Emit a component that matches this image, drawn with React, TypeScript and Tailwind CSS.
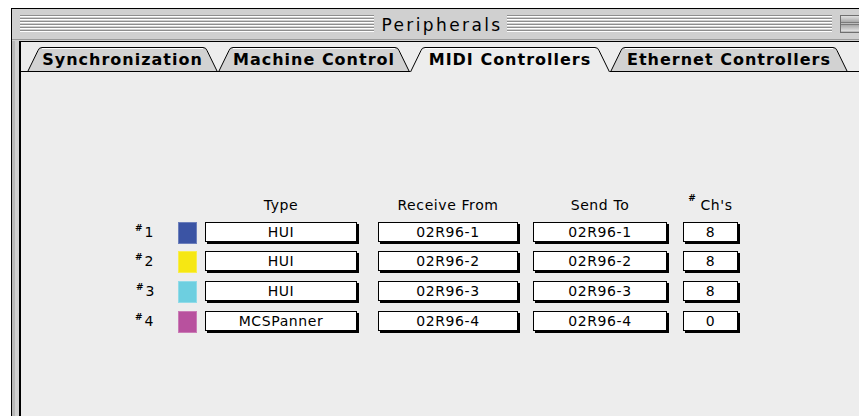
import * as React from "react";

const stripes =
  "h-[18px] bg-[repeating-linear-gradient(to_bottom,#8e8e8e_0px,#8e8e8e_1px,#ffffff_1px,#ffffff_2px,#d0d0d0_2px,#d0d0d0_3px)]";

type TabProps = { label: string; w: number; active?: boolean };

function Tab({ label, w, active }: TabProps) {
  const s = 11;
  const h = 25;
  const d = `M0.5 ${h} L${s} 3.5 Q${s + 1} 0.5 ${s + 4} 0.5 L${w - s - 4} 0.5 Q${w - s - 1} 0.5 ${w - s} 3.5 L${w - 0.5} ${h}`;
  return (
    <div className="relative flex h-[25px] shrink-0 items-center justify-center" style={{ width: w }}>
      <svg className="absolute inset-0 overflow-visible" width={w} height={h} viewBox={`0 0 ${w} ${h}`}>
        <path d={d + " Z"} fill={active ? "#ededed" : "#d2d2d2"} stroke="none" />
        <path d={`M${s + 4} 1.5 L${w - s - 4} 1.5`} stroke="#ffffff" strokeWidth="1" />
        <path d={d} fill="none" stroke="#000" strokeWidth="1" />
        {!active && <path d={`M0 ${h - 0.5} L${w} ${h - 0.5}`} stroke="#000" strokeWidth="1" />}
      </svg>
      <span className="relative text-[16px] font-bold tracking-[1px] text-black">{label}</span>
    </div>
  );
}

function Field({ text, w }: { text: string; w: string }) {
  return (
    <div
      className={`${w} flex h-[20px] shrink-0 items-center justify-center border border-black bg-white shadow-[2px_2px_0_#000] text-[14px] tracking-[0.6px] text-black`}
    >
      {text}
    </div>
  );
}

const rows = [
  { n: "1", color: "bg-[#3b54a4]", type: "HUI", recv: "02R96-1", send: "02R96-1", ch: "8", mt: "mt-[8px]" },
  { n: "2", color: "bg-[#f6e713]", type: "HUI", recv: "02R96-2", send: "02R96-2", ch: "8", mt: "mt-[7px]" },
  { n: "3", color: "bg-[#6dcfe0]", type: "HUI", recv: "02R96-3", send: "02R96-3", ch: "8", mt: "mt-[8px]" },
  { n: "4", color: "bg-[#b8519e]", type: "MCSPanner", recv: "02R96-4", send: "02R96-4", ch: "0", mt: "mt-[8px]" },
];

export default function App() {
  return (
    <div
      className="h-[416px] w-[859px] overflow-hidden bg-white pl-[11px] pt-[8px]"
      style={{ fontFamily: '"DejaVu Sans", "Liberation Sans", sans-serif' }}
    >
      <div className="flex h-[420px] w-[900px] flex-col border-l border-t border-black bg-[#d0d0d0]">
        {/* title bar */}
        <div className="flex h-[31px] shrink-0 items-center border-b border-[#9a9a9a] pl-[8px]">
          <div className={`w-[354px] ${stripes}`} />
          <div className="w-[133px] pl-[3px] pt-[3px] text-center text-[17px] tracking-[2.4px] text-black">Peripherals</div>
          <div className={`w-[325px] ${stripes}`} />
          <div className="ml-[8px] flex h-[18px] w-[22px] flex-col border border-[#6f6f6f] bg-[#bdbdbd]">
            <div className="h-[7px] border-b border-[#7a7a7a] bg-[linear-gradient(#e0e0e0,#a8a8a8)]" />
            <div className="mt-[1px] h-[7px] border-t border-[#7a7a7a] bg-[linear-gradient(#a8a8a8,#e0e0e0)]" />
          </div>
        </div>

        {/* body */}
        <div className="mt-px flex flex-1 shadow-[inset_3px_0_0_#b8b8b8]">
          <div className="ml-[7px] flex-1 border-l-2 border-t border-black bg-[#ededed]">
            {/* tabs */}
            <div className="flex pt-[5px]">
              <div className="h-[25px] w-[6px] border-b border-black" />
              <Tab label="Synchronization" w={191} />
              <Tab label="Machine Control" w={192} />
              <Tab label="MIDI Controllers" w={200} active />
              <Tab label="Ethernet Controllers" w={238} />
              <div className="h-[25px] flex-1 border-b border-black" />
            </div>

            {/* table */}
            <div className="flex flex-col pl-[114px] pt-[124px] text-black">
              <div className="flex h-[18px] items-center text-[14px] tracking-[0.6px]">
                <div className="w-[70px]" />
                <div className="w-[152px] text-center">Type</div>
                <div className="w-[21px]" />
                <div className="w-[140px] text-center">Receive From</div>
                <div className="w-[15px]" />
                <div className="w-[134px] text-center">Send To</div>
                <div className="w-[16px]" />
                <div className="flex w-[55px] items-start justify-center">
                  <span className="mr-[4px] -translate-y-[3px] text-[9px] font-bold">#</span>
                  <span>Ch's</span>
                </div>
              </div>

              {rows.map((r) => (
                <div key={r.n} className={`flex h-[22px] items-start ${r.mt}`}>
                  <div className="flex h-[20px] w-[43px] items-center">
                    <span className={`${r.n === "3" ? "ml-[1px]" : ""} mr-[2px] -translate-y-[3px] text-[9px] font-bold`}>#</span>
                    <span className="text-[14px]">{r.n}</span>
                  </div>
                  <div className={`mr-[8px] h-[22px] w-[19px] shrink-0 border border-white/25 ${r.color}`} />
                  <Field text={r.type} w="w-[152px]" />
                  <div className="w-[21px]" />
                  <Field text={r.recv} w="w-[140px]" />
                  <div className="w-[15px]" />
                  <Field text={r.send} w="w-[134px]" />
                  <div className="w-[16px]" />
                  <Field text={r.ch} w="w-[55px]" />
                </div>
              ))}
            </div>
          </div>
        </div>
      </div>
    </div>
  );
}
